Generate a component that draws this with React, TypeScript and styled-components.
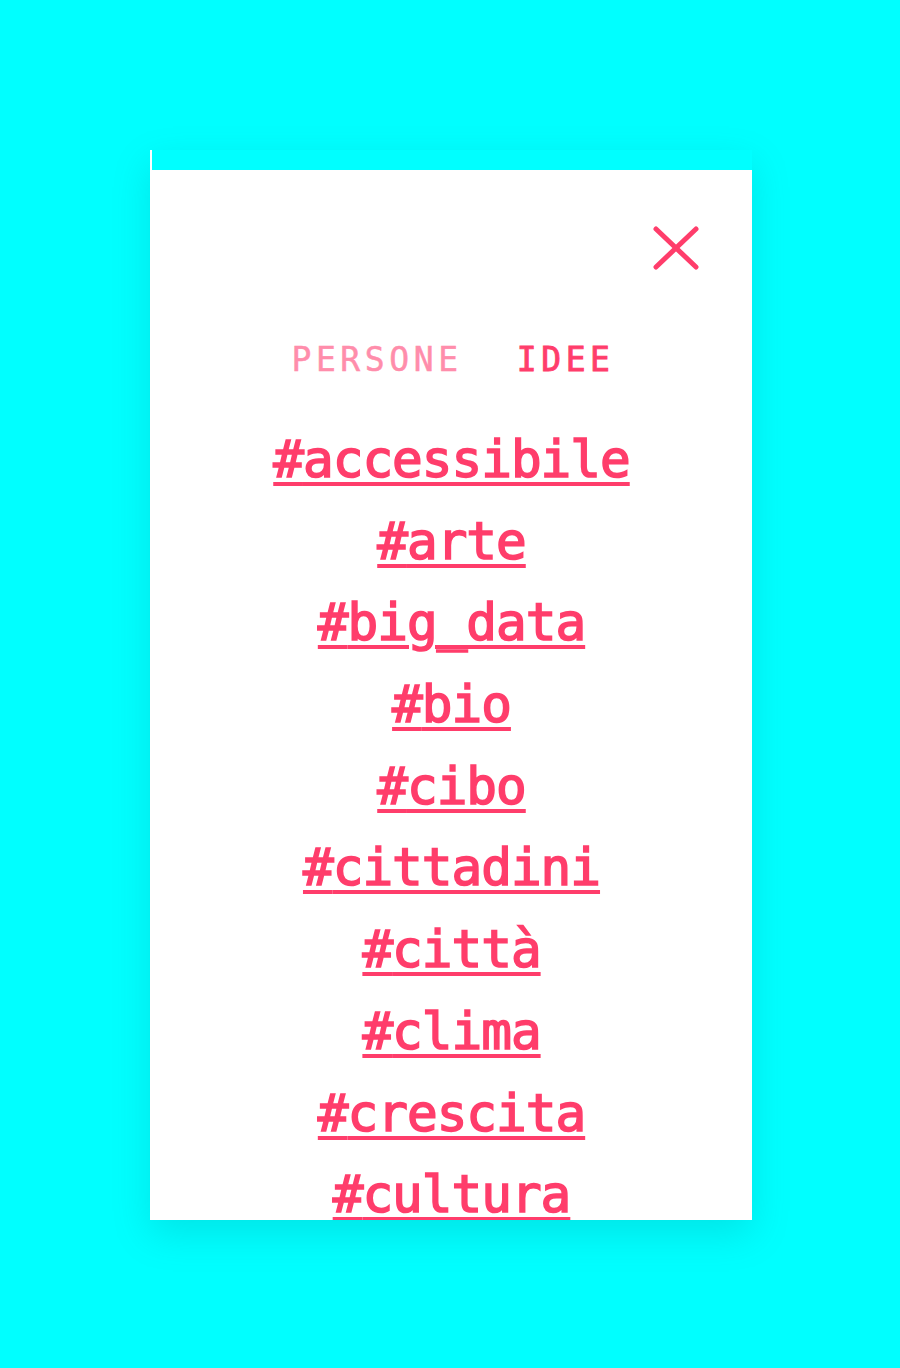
import React from "react";
import styled, { createGlobalStyle } from "styled-components";

const Global = createGlobalStyle`
  html, body {
    margin: 0;
    padding: 0;
    background: #00ffff;
  }
  body {
    font-family: "DejaVu Sans Mono", "Liberation Mono", monospace;
  }
`;

const Page = styled.div`
  min-height: 1368px;
  padding-top: 150px;
  box-sizing: border-box;
`;

const Panel = styled.div`
  margin-left: 150px;
  width: 602px;
  height: 1070px;
  background: #ffffff;
  overflow: hidden;
  box-shadow: 0 14px 36px rgba(0, 110, 120, 0.18);
  display: flex;
  flex-direction: column;
`;

const TopStrip = styled.div`
  height: 20px;
  margin-left: 2px;
  background: #00ffff;
  flex: none;
`;

const CloseRow = styled.div`
  display: flex;
  justify-content: flex-end;
  padding: 56px 53px 0 0;
`;

const CloseButton = styled.button`
  border: 0;
  background: none;
  padding: 0;
  width: 46px;
  height: 44px;
  cursor: pointer;
  display: block;
`;

const Tabs = styled.nav`
  display: flex;
  justify-content: center;
  gap: 54px;
  margin-top: 70px;
  padding-left: 4px;
`;

const Tab = styled.span<{ $active?: boolean }>`
  font-family: "DejaVu Sans Mono", "Liberation Mono", monospace;
  font-size: 33px;
  line-height: 40px;
  letter-spacing: 4.6px;
  color: ${(p) => (p.$active ? "#ff3d6b" : "#ff8dab")};
  font-weight: 400;
  -webkit-text-stroke: ${(p) => (p.$active ? "0.9px" : "0.5px")} currentColor;
  text-transform: uppercase;
`;

const TagList = styled.ul`
  list-style: none;
  margin: 39px 0 0;
  padding: 0;
  text-align: center;
`;

const TagItem = styled.li`
  line-height: 81.7px;
  height: 81.7px;
`;

const TagLink = styled.a`
  font-family: "DejaVu Sans Mono", "Liberation Mono", monospace;
  font-weight: 400;
  font-size: 51px;
  letter-spacing: -1px;
  color: #ff3d6b;
  -webkit-text-stroke: 1.6px #ff3d6b;
  text-decoration: underline;
  text-decoration-thickness: 4px;
  text-underline-offset: 5px;
  padding-left: 1px;
`;

const tags = [
  "accessibile",
  "arte",
  "big_data",
  "bio",
  "cibo",
  "cittadini",
  "città",
  "clima",
  "crescita",
  "cultura",
];

export default function App() {
  return (
    <>
      <Global />
      <Page>
        <Panel>
          <TopStrip />
          <CloseRow>
            <CloseButton aria-label="Chiudi">
              <svg width="46" height="44" viewBox="0 0 46 44">
                <path
                  d="M3 3 L43 41 M43 3 L3 41"
                  stroke="#ff3d6b"
                  strokeWidth="5"
                  strokeLinecap="round"
                  fill="none"
                />
              </svg>
            </CloseButton>
          </CloseRow>
          <Tabs>
            <Tab>Persone</Tab>
            <Tab $active>Idee</Tab>
          </Tabs>
          <TagList>
            {tags.map((t) => (
              <TagItem key={t}>
                <TagLink href="#">#{t}</TagLink>
              </TagItem>
            ))}
          </TagList>
        </Panel>
      </Page>
    </>
  );
}
